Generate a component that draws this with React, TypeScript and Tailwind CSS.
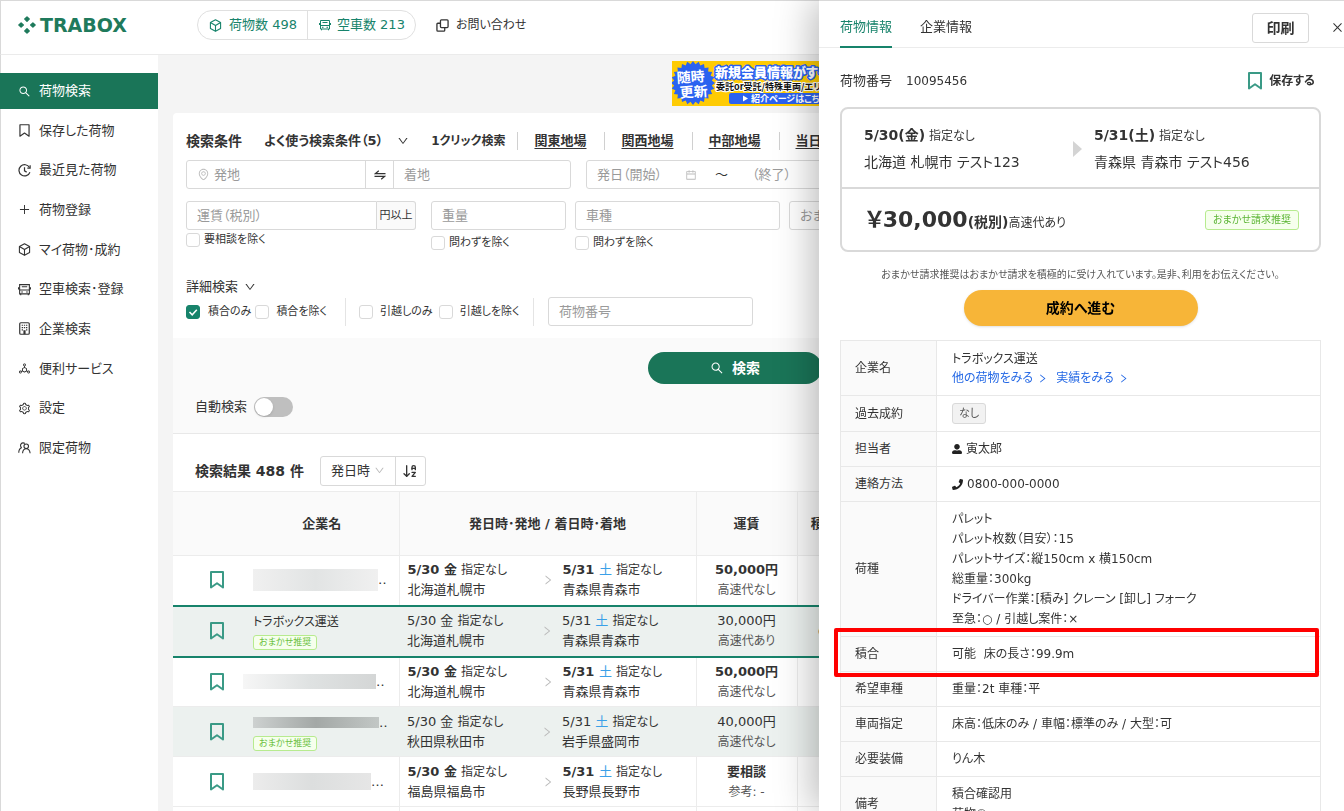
import React from "react";
import {
  AiOutlineSearch,
  AiOutlinePlus,
  AiOutlineDeploymentUnit,
  AiOutlineSetting,
  AiOutlineEnvironment,
  AiOutlineCalendar,
  AiOutlineDown,
  AiOutlineRight,
  AiOutlineClose,
} from "react-icons/ai";
import { FaUserAlt, FaPhone } from "react-icons/fa";
import { ArrowDownAZ } from "lucide-react";

type IconProps = { className?: string };

function Bookmark({ className }: IconProps) {
  return (
    <svg viewBox="0 0 14 18" className={className} fill="none" stroke="currentColor" strokeWidth="2" aria-hidden="true">
      <path d="M1 1h12v15.5l-6-4.2-6 4.2z" strokeLinejoin="round" />
    </svg>
  );
}

function SmallBookmark({ className }: IconProps) {
  return (
    <svg viewBox="0 0 12 12" className={className} fill="none" stroke="currentColor" strokeWidth="1.1" aria-hidden="true">
      <path d="M1.8.7h8.4v10.5L6 8.4l-4.2 2.8z" strokeLinejoin="round" />
    </svg>
  );
}

function Cube({ className }: IconProps) {
  return (
    <svg viewBox="0 0 12 12" className={className} fill="none" stroke="currentColor" strokeWidth="1" strokeLinejoin="round" aria-hidden="true">
      <path d="M6 .7l4.700 2.600v5.400L6 11.300 1.300 8.700V3.300z" />
      <path d="M1.300 3.300L6 6l4.700-2.700M6 6v5.300" />
    </svg>
  );
}

function History({ className }: IconProps) {
  return (
    <svg viewBox="0 0 12 12" className={className} fill="none" stroke="currentColor" strokeWidth="1.1" aria-hidden="true">
      <path d="M10.6 3.200A5.200 5.200 0 1 0 11 7.600" />
      <path d="M11.200 1.200v2.600H8.600" />
      <path d="M6 3v3.300l2 1.200" />
    </svg>
  );
}

function Truck({ className }: IconProps) {
  return (
    <svg viewBox="0 0 12 12" className={className} fill="none" stroke="currentColor" strokeWidth="1" aria-hidden="true">
      <path d="M1.500 10V1.500h9V10z" />
      <path d="M.5 4v2M11.500 4v2M1.500 6.500h9M3.500 3.500h5" />
      <path d="M3 8.300h1.500M7.500 8.300H9M2.500 10v1.300M9.500 10v1.300" />
    </svg>
  );
}

function Building({ className }: IconProps) {
  return (
    <svg viewBox="0 0 12 12" className={className} fill="none" stroke="currentColor" strokeWidth="1.1" aria-hidden="true">
      <rect x="1.6" y=".7" width="8.8" height="10.6" rx="1" />
      <path d="M3.400 3h1.200M5.400 3h1.200M7.400 3h1.200M3.400 5.200h1.200M5.400 5.200h1.200M7.400 5.200h1.200M3.400 7.200h1.200M7.400 7.200h1.200" />
      <path d="M6 7.600v3.600" strokeWidth="2" />
    </svg>
  );
}

function People({ className }: IconProps) {
  return (
    <svg viewBox="0 0 12 12" className={className} fill="none" stroke="currentColor" strokeWidth="1" aria-hidden="true">
      <path d="M3.200 6A2.400 2.400 0 1 1 6.300 2.300" />
      <path d="M.7 10.800c0-2.400 1-4 2.900-4.700" />
      <circle cx="7.600" cy="4.800" r="2.100" />
      <path d="M4.200 11.300c.2-2.600 1.400-4.200 3.400-4.200s3.300 1.600 3.600 4.200" />
    </svg>
  );
}

function Windows({ className }: IconProps) {
  return (
    <svg viewBox="0 0 14 14" className={className} fill="none" stroke="currentColor" strokeWidth="1.4" aria-hidden="true">
      <rect x="4.800" y="1" width="8.200" height="8.200" rx="1" />
      <path d="M4.600 4.600H2a1 1 0 0 0-1 1V12a1 1 0 0 0 1 1h6.400a1 1 0 0 0 1-1V9.400" />
    </svg>
  );
}

function Swap({ className }: IconProps) {
  return (
    <svg viewBox="0 0 12 12" className={className} fill="none" stroke="currentColor" strokeWidth="1.200" aria-hidden="true">
      <path d="M11.500 4.600H1.500L4.800 1.800M.5 7.400H10.500L7.200 10.200" />
    </svg>
  );
}

function LogoMark({ className }: IconProps) {
  return (
    <svg viewBox="0 0 18 18" className={className} fill="currentColor" aria-hidden="true">
      <path
        d="M9 1l2.200 2.100L9 5.200 6.800 3.100zM9 12.800l2.200 2.100L9 17l-2.200-2.100zM3.100 6.900L5.300 9l-2.200 2.100L.9 9zM14.900 6.900L17.100 9l-2.200 2.100L12.700 9z"
        stroke="currentColor"
        strokeWidth="1.400"
        strokeLinejoin="round"
      />
    </svg>
  );
}

const menu = [
  { label: "荷物検索", Icon: AiOutlineSearch },
  { label: "保存した荷物", Icon: SmallBookmark },
  { label: "最近見た荷物", Icon: History },
  { label: "荷物登録", Icon: AiOutlinePlus },
  { label: "マイ荷物･成約", Icon: Cube },
  { label: "空車検索･登録", Icon: Truck },
  { label: "企業検索", Icon: Building },
  { label: "便利サービス", Icon: AiOutlineDeploymentUnit },
  { label: "設定", Icon: AiOutlineSetting },
  { label: "限定荷物", Icon: People },
];

function Sidebar() {
  return (
    <nav className="w-[158px] shrink-0 border-l border-[#d9d9d9] bg-white pt-[18px]">
      <ul className="flex h-[393px] flex-col justify-between">
        {menu.map(({ label, Icon }, i) => (
          <li key={label}>
            <a
              href="#"
              className={
                i === 0
                  ? "-ml-px flex h-9 items-center gap-2 bg-[#1a7558] pl-[18px] text-white"
                  : "-ml-px flex h-9 items-center gap-2 pl-[18px]"
              }
            >
              <Icon className="h-[13px] w-[13px]" />
              {label}
            </a>
          </li>
        ))}
      </ul>
    </nav>
  );
}

function Header() {
  return (
    <header className="flex h-[55px] shrink-0 items-center border-t border-b border-l border-t-[#d9d9d9] border-b-[#ebebeb] border-l-[#d9d9d9] bg-white pb-[5px]">
      <a href="#" className="ml-[17px] flex w-[179px] items-center gap-1 text-[#1f7a5c]">
        <LogoMark className="h-[18px] w-[18px]" />
        <span className="text-[19px] leading-6 font-bold">TRABOX</span>
      </a>
      <div className="flex h-[30px] items-center rounded-full border border-[#e0e0e0] text-[#17836b]">
        <a href="#" className="flex h-full items-center gap-[7px] border-r border-[#e0e0e0] pr-[10px] pl-[11px]">
          <Cube className="h-[13px] w-[13px]" />
          荷物数 498
        </a>
        <a href="#" className="flex h-full items-center gap-[6px] pr-[10px] pl-[11px]">
          <Truck className="h-3 w-3" />
          空車数 213
        </a>
      </div>
      <a href="#" className="ml-5 flex items-center gap-[7px] text-[12px]">
        <Windows className="h-[13px] w-[13px]" />
        お問い合わせ
      </a>
    </header>
  );
}

function Banner() {
  const spikes = Array.from({ length: 48 }, (_, i) => {
    const r = i % 2 ? 19 : 22;
    const a = (i * Math.PI) / 24;
    return `${(22 + r * Math.cos(a)).toFixed(1)},${(22 + r * Math.sin(a)).toFixed(1)}`;
  }).join(" ");
  return (
    <a href="#" className="ml-[514px] block w-[320px]">
      <svg viewBox="0 0 320 45" className="block w-full font-['Noto_Sans_CJK_JP',sans-serif]" role="img" aria-label="新規会員情報">
        <rect width="320" height="45" fill="#fecb04" />
        <polygon points={spikes} fill="#2b62f0" transform="translate(-1 0)" />
        <rect x="57" y="32" width="240" height="11" rx="2" fill="#2b62f0" />
        <g fill="#fff" fontWeight="700">
          <text x="5" y="21" fontSize="14" transform="rotate(-4 20 22)">随時</text>
          <text x="7" y="36" fontSize="14" transform="rotate(-4 20 22)">更新</text>
          <text x="43" y="16" fontSize="13" fontWeight="900" stroke="#2b62f0" strokeWidth="3" paintOrder="stroke" strokeLinejoin="round">
            新規会員情報がすぐ届く
          </text>
          <text x="44" y="29" fontSize="9" fill="#111" stroke="#fff" strokeWidth="2" paintOrder="stroke">
            委託or受託/特殊車両/エリア
          </text>
          <path d="M71 34.500l5 3-5 3z" />
          <text x="79" y="41" fontSize="9">紹介ページはこちら</text>
        </g>
      </svg>
    </a>
  );
}

const field = "h-[29px] rounded-[3px] border border-[#d9d9d9] bg-white px-[10px] text-[13px] placeholder:text-[#9a9a9a]";

function Check({ label, checked = false, className = "gap-1" }: { label: string; checked?: boolean; className?: string }) {
  return (
    <label className={`flex items-center whitespace-nowrap text-[11px] leading-4 ${className}`}>
      <span className="grid h-[14px] w-[14px]">
        <input
          type="checkbox"
          defaultChecked={checked}
          className="peer col-start-1 row-start-1 h-[14px] w-[14px] appearance-none rounded-[3px] border border-[#d9d9d9] bg-white checked:border-[#17836b] checked:bg-[#17836b]"
        />
        <svg viewBox="0 0 14 14" className="pointer-events-none col-start-1 row-start-1 hidden h-[14px] w-[14px] peer-checked:block" fill="none" stroke="#fff" strokeWidth="1.500" aria-hidden="true">
          <path d="M3.500 7l2.700 2.800 4.600-5" />
        </svg>
      </span>
      {label}
    </label>
  );
}

const areas = ["関東地場", "関西地場", "中部地場", "当日積み"];

function SearchForm() {
  return (
    <form onSubmit={(e) => e.preventDefault()} className="overflow-hidden rounded-t">
      <div className="h-[225px] bg-white pt-[18px] pl-[13px] whitespace-nowrap">
        <div className="flex h-5 items-center">
          <h2 className="mr-[22px] text-[14px] font-bold">検索条件</h2>
          <button type="button" className="flex items-center gap-[14px] font-bold">
            よく使う検索条件（5）
            <AiOutlineDown className="h-3 w-3" />
          </button>
          <span className="mr-3 ml-[22px] text-[12px] font-bold">1クリック検索</span>
          {areas.map((a) => (
            <span key={a} className="flex h-[18px] items-center border-l border-[#d0d0d0] pr-[18px] pl-4">
              <a href="#" className="font-bold underline underline-offset-3">
                {a}
              </a>
            </span>
          ))}
        </div>

        <div className="mt-[9px] flex gap-[15px]">
          <div className="flex w-[385px] rounded-[3px] border border-[#d9d9d9]">
            <label className="flex h-[27px] w-[178px] items-center gap-1 pl-[10px]">
              <AiOutlineEnvironment className="h-[13px] w-[13px] shrink-0 text-[#bbb]" />
              <input aria-label="発地" placeholder="発地" className="w-full min-w-0 text-[13px] placeholder:text-[#9a9a9a]" />
            </label>
            <button type="button" aria-label="入れ替え" className="flex w-[29px] items-center justify-center border-x border-[#d9d9d9]">
              <Swap className="h-3 w-3" />
            </button>
            <input aria-label="着地" placeholder="着地" className="min-w-0 flex-1 px-[10px] text-[13px] placeholder:text-[#9a9a9a]" />
          </div>
          <div className="flex w-[400px] items-center rounded-[3px] border border-[#d9d9d9] pl-[10px]">
            <input aria-label="発日（開始）" placeholder="発日（開始）" className="w-[88px] text-[13px] placeholder:text-[#9a9a9a]" />
            <AiOutlineCalendar className="h-3 w-3 text-[#bbb]" />
            <span className="mr-6 ml-[18px]">〜</span>
            <input aria-label="（終了）" placeholder="（終了）" className="w-[100px] text-[13px] placeholder:text-[#9a9a9a]" />
          </div>
        </div>

        <div className="mt-3 flex">
          <div className="mr-[15px]">
            <div className="flex">
              <input aria-label="運賃（税別）" placeholder="運賃（税別）" className={`${field} w-[191px] rounded-r-none`} />
              <span className="flex w-[39px] items-center justify-center rounded-r-[3px] border border-l-0 border-[#d9d9d9] bg-[#fafafa] text-[11px]">
                円以上
              </span>
            </div>
            <Check label="要相談を除く" className="mt-[2px] gap-1" />
          </div>
          <div className="mr-[9px]">
            <input aria-label="重量" placeholder="重量" className={`${field} w-[135px]`} />
            <Check label="問わずを除く" className="mt-[5px] gap-1" />
          </div>
          <div className="mr-[9px]">
            <input aria-label="車種" placeholder="車種" className={`${field} w-[205px]`} />
            <Check label="問わずを除く" className="mt-[5px] gap-1" />
          </div>
          <input aria-label="おまかせ請求" placeholder="おまかせ請求" className={`${field} w-[205px]`} />
        </div>

        <button type="button" className="mt-[26px] flex h-5 items-center gap-[6px]">
          詳細検索
          <AiOutlineDown className="h-3 w-3" />
        </button>
        <div className="flex h-[29px] items-center">
          <div className="flex w-[160px] items-center gap-1 border-r border-[#e4e4e4] py-[6px]">
            <Check label="積合のみ" checked className="gap-2" />
            <Check label="積合を除く" className="gap-[7px]" />
          </div>
          <div className="ml-[13px] flex w-[175px] items-center gap-[6px] border-r border-[#e4e4e4] py-[6px]">
            <Check label="引越しのみ" className="gap-[7px]" />
            <Check label="引越しを除く" className="gap-[7px]" />
          </div>
          <input aria-label="荷物番号" placeholder="荷物番号" className={`${field} ml-[14px] w-[205px]`} />
        </div>
      </div>

      <div className="h-24 border-b border-[#e8e8e8] bg-[#fafafa] pt-[14px] pr-8">
        <button className="mx-auto flex h-8 w-[174px] items-center justify-center gap-2 rounded-full bg-[#1a7558] text-[14px] font-bold text-white">
          <AiOutlineSearch className="h-[14px] w-[14px]" />
          検索
        </button>
        <label className="mt-[13px] ml-[22px] flex w-fit items-center gap-[7px]">
          自動検索
          <span className="flex h-5 w-[39px] items-center rounded-full bg-[#bfbfbf] p-px has-checked:justify-end has-checked:bg-[#17836b]">
            <input type="checkbox" role="switch" className="h-[18px] w-[18px] appearance-none rounded-full bg-white shadow" />
          </span>
        </label>
      </div>
    </form>
  );
}

type Row = {
  name?: string;
  mask?: string;
  dots?: string;
  tag?: boolean;
  read?: boolean;
  selected?: boolean;
  from: string;
  to: string;
  fare: string;
  note: string;
};

const rows: Row[] = [
  { mask: "h-[22px] w-[125px] from-[#f0f0f0] via-[#e2e4e4] to-[#f0f0f0]", dots: "‥", from: "北海道札幌市", to: "青森県青森市", fare: "50,000円", note: "高速代なし" },
  { name: "トラボックス運送", tag: true, read: true, selected: true, from: "北海道札幌市", to: "青森県青森市", fare: "30,000円", note: "高速代あり" },
  { mask: "-ml-[10px] h-[15px] w-[133px] from-[#f6f6f6] via-[#dfe2e2] to-[#d4d6d6]", dots: "‥", from: "北海道札幌市", to: "青森県青森市", fare: "50,000円", note: "高速代なし" },
  { mask: "h-[11px] w-[126px] from-[#cdd1d0] via-[#a3a8a6] to-[#c2c7c5]", dots: "‥", tag: true, read: true, from: "秋田県秋田市", to: "岩手県盛岡市", fare: "40,000円", note: "高速代なし" },
  { mask: "h-[17px] w-[118px] from-[#ececec] via-[#dcdede] to-[#e6e6e6]", dots: "…", from: "福島県福島市", to: "長野県長野市", fare: "要相談", note: "参考: -" },
  { from: "", to: "", fare: "", note: "" },
];

function Place({ date, day, dayClass, place, bold }: { date: string; day: string; dayClass: string; place: string; bold: boolean }) {
  return (
    <div>
      <div>
        <span className={bold ? "font-bold" : ""}>
          {date} <span className={dayClass}>{day}</span>
        </span>{" "}
        <span className="text-[12px]">指定なし</span>
      </div>
      <div>{place}</div>
    </div>
  );
}

function Results() {
  return (
    <section className="bg-white">
      <div className="flex h-[57px] items-center pt-4 pl-[22px]">
        <h2 className="mr-4 text-[14px] font-bold">検索結果 488 件</h2>
        <div className="flex h-[30px] rounded-[3px] border border-[#d9d9d9]">
          <label className="grid w-[75px] items-center border-r border-[#d9d9d9]">
            <select aria-label="並び順" className="col-start-1 row-start-1 h-full w-full appearance-none pl-[10px] text-[13px]">
              <option>発日時</option>
            </select>
            <AiOutlineDown className="pointer-events-none col-start-1 row-start-1 mr-[10px] h-[11px] w-[11px] justify-self-end text-[#bbb]" />
          </label>
          <button aria-label="昇順" className="flex w-[29px] items-center justify-center">
            <ArrowDownAZ className="h-4 w-4" strokeWidth={2} />
          </button>
        </div>
      </div>
      <table className="w-full table-fixed border-collapse text-[13px] leading-5">
        <colgroup>
          <col className="w-[72px]" />
          <col className="w-[154px]" />
          <col className="w-[297px]" />
          <col className="w-[101px]" />
          <col className="w-[53px]" />
          <col />
        </colgroup>
        <thead>
          <tr className="h-16 border-y border-[#ececec] bg-[#fafafa]">
            <th />
            <th className="border-r border-[#ececec]">企業名</th>
            <th className="border-r border-[#ececec]">発日時･発地 / 着日時･着地</th>
            <th className="border-r border-[#ececec]">運賃</th>
            <th>積合</th>
            <th>備考</th>
          </tr>
        </thead>
        <tbody>
          {rows.map((r, i) => (
            <tr
              key={i}
              className={
                r.selected
                  ? "h-[51px] border-y-2 border-[#17836b] bg-[#ecf1ef]"
                  : r.read
                    ? "h-[50px] border-b border-[#ececec] bg-[#ecf1ef]"
                    : "h-[50px] border-b border-[#ececec]"
              }
            >
              {r.from ? (
                <>
                  <td className="pl-[37px]">
                    <button aria-label="保存" className="block text-[#3a9a86]">
                      <Bookmark className="h-[18px] w-[14px]" />
                    </button>
                  </td>
                  <td className={r.read ? "pl-2" : "border-r border-[#ececec] pl-2"}>
                    {r.name ? (
                      <div className="text-[12px]">{r.name}</div>
                    ) : (
                      <div className={r.tag ? "flex h-5 items-center" : "flex items-center"}>
                        <span className={`bg-gradient-to-r ${r.mask}`} />
                        <span className="leading-3">{r.dots}</span>
                      </div>
                    )}
                    {r.tag && (
                      <span className="mt-[3px] block w-fit rounded-[3px] border border-[#b7eb8f] bg-[#f6ffed] px-[5px] text-[9px] leading-[13px] text-[#6abf40]">
                        おまかせ推奨
                      </span>
                    )}
                  </td>
                  <td className={r.read ? "px-2" : "border-r border-[#ececec] px-2"}>
                    <div className="flex items-center">
                      <div className="w-[134px]">
                        <Place date="5/30" day="金" dayClass="" place={r.from} bold={!r.read} />
                      </div>
                      <AiOutlineRight className="mr-[9px] h-3 w-3 text-[#bbb]" />
                      <Place date="5/31" day="土" dayClass="font-normal text-[#3aa0e8]" place={r.to} bold={!r.read} />
                    </div>
                  </td>
                  <td className={r.read ? "text-center" : "border-r border-[#ececec] text-center"}>
                    <div className={r.read ? "" : "font-bold"}>{r.fare}</div>
                    <div className="text-[12px] text-[#555]">{r.note}</div>
                  </td>
                  <td className="text-center">{r.selected ? "○" : ""}</td>
                  <td />
                </>
              ) : (
                <>
                  <td />
                  <td className="border-r border-[#ececec]" />
                  <td className="border-r border-[#ececec]" />
                  <td className="border-r border-[#ececec]" />
                  <td />
                  <td />
                </>
              )}
            </tr>
          ))}
        </tbody>
      </table>
    </section>
  );
}

function MoreLink({ children }: { children: React.ReactNode }) {
  return (
    <a href="#" className="flex items-center gap-1 text-[#2468e5]">
      {children}
      <AiOutlineRight className="h-[11px] w-[11px]" />
    </a>
  );
}

const details: { label: string; body: React.ReactNode; marked?: boolean }[] = [
  {
    label: "企業名",
    body: (
      <div className="py-px">
        トラボックス運送
        <div className="flex gap-2 leading-[18px]">
          <MoreLink>他の荷物をみる</MoreLink>
          <MoreLink>実績をみる</MoreLink>
        </div>
      </div>
    ),
  },
  {
    label: "過去成約",
    body: <span className="block w-fit rounded-[3px] border border-[#d9d9d9] bg-[#f2f2f2] px-[6px] text-[11px] leading-[19px] text-[#555]">なし</span>,
  },
  {
    label: "担当者",
    body: (
      <span className="flex items-center gap-1">
        <FaUserAlt className="h-[10px] w-[10px] text-[#222]" />
        寅太郎
      </span>
    ),
  },
  {
    label: "連絡方法",
    body: (
      <span className="flex items-center gap-1">
        <FaPhone className="h-[11px] w-[11px] text-[#222]" />
        0800-000-0000
      </span>
    ),
  },
  {
    label: "荷種",
    body: (
      <>
        <div>パレット</div>
        <div>パレット枚数（目安）：15</div>
        <div>パレットサイズ：縦150cm x 横150cm</div>
        <div>総重量：300kg</div>
        <div>ドライバー作業：[積み] クレーン [卸し] フォーク</div>
        <div>至急：○ / 引越し案件：×</div>
      </>
    ),
  },
  { label: "積合", body: <>可能&nbsp; 床の長さ：99.9m</>, marked: true },
  { label: "希望車種", body: "重量：2t 車種：平" },
  { label: "車両指定", body: "床高：低床のみ / 車幅：標準のみ / 大型：可" },
  { label: "必要装備", body: "りん木" },
  {
    label: "備考",
    body: (
      <>
        <div>積合確認用</div>
        <div>荷物①</div>
      </>
    ),
  },
];

function Drawer() {
  return (
    <aside className="fixed inset-y-0 right-0 z-20 w-[525px] overflow-hidden border-t border-[#d9d9d9] bg-white shadow-[-6px_0_36px_rgba(0,0,0,0.28)]">
      <div className="flex h-[47px] items-center border-b border-[#ececec] pl-[21px]">
        <div role="tablist" className="flex h-[47px] gap-7">
          <button role="tab" aria-selected="true" className="border-b-2 border-[#17836b] pt-[7px] text-[#17836b]">
            荷物情報
          </button>
          <button role="tab" aria-selected="false" className="border-b-2 border-transparent pt-[7px]">
            企業情報
          </button>
        </div>
        <button className="mt-[7px] mr-[22px] ml-auto h-[30px] w-[57px] rounded-[3px] border border-[#d9d9d9] text-[14px] font-bold">印刷</button>
        <button aria-label="閉じる" className="mt-[7px]">
          <AiOutlineClose className="h-[13px] w-[13px]" />
        </button>
      </div>

      <div className="pr-[23px] pl-[21px]">
        <div className="flex h-[59px] items-center pt-[7px]">
          <span className="mr-[14px]">荷物番号</span>
          <span className="text-[12px]">10095456</span>
          <button className="mr-[6px] ml-auto flex items-center gap-[7px] text-[12px] font-bold">
            <Bookmark className="h-[18px] w-[14px] text-[#3a9a86]" />
            保存する
          </button>
        </div>

        <div className="rounded-lg border-2 border-[#d9d9d9]">
          <div className="flex h-20 items-center border-b-2 border-[#d9d9d9] pt-px pl-[22px] text-[14px] leading-[26px]">
            <div className="w-[209px]">
              <div className="text-[12px]">
                <b className="text-[14px]">5/30(金)</b> 指定なし
              </div>
              <div>北海道 札幌市 テスト123</div>
            </div>
            <svg viewBox="0 0 9 16" className="mr-3 h-4 w-[9px]" aria-hidden="true">
              <path d="M0 0l9 8-9 8z" fill="#d4d4d4" />
            </svg>
            <div>
              <div className="text-[12px]">
                <b className="text-[14px]">5/31(土)</b> 指定なし
              </div>
              <div>青森県 青森市 テスト456</div>
            </div>
          </div>
          <div className="flex h-[61px] items-center justify-between pr-5 pl-6">
            <div className="flex items-baseline">
              <b className="text-[22px] leading-8">￥30,000</b>
              <b className="text-[14px]">(税別)</b>
              <span className="text-[12px]">高速代あり</span>
            </div>
            <span className="rounded-[3px] border border-[#b7eb8f] bg-[#f6ffed] px-[7px] text-[10px] leading-[18px] text-[#5cb535]">おまかせ請求推奨</span>
          </div>
        </div>

        <p className="mt-[14px] text-center text-[10px] leading-[18px] whitespace-nowrap text-[#555]">
          おまかせ請求推奨はおまかせ請求を積極的に受け入れています。是非、利用をお伝えください。
        </p>
        <button className="mx-auto mt-[6px] block h-9 w-[234px] rounded-full bg-[#f7b538] text-[14px] font-bold text-black shadow-sm">成約へ進む</button>

        <table className="mt-[14px] w-full border-collapse text-[12px] leading-5">
          <tbody>
            {details.map((d) => (
              <tr key={d.label} className="relative border border-[#e8e8e8]">
                <th className="w-24 border-r border-[#e8e8e8] bg-[#fafafa] py-[7px] pl-[14px] text-left font-normal">
                  {d.label}
                  {d.marked && <span className="pointer-events-none absolute -top-[10px] right-px -bottom-[6px] -left-2 z-10 rounded-[2px] border-4 border-[#ff0000]" />}
                </th>
                <td className="py-[7px] pl-[15px]">{d.body}</td>
              </tr>
            ))}
          </tbody>
        </table>
      </div>
    </aside>
  );
}

export default function App() {
  return (
    <div className="flex h-screen flex-col overflow-hidden bg-[#f4f4f4] font-['DejaVu_Sans','Noto_Sans_CJK_JP',sans-serif] text-[13px] leading-5 text-[#333] [font-feature-settings:'palt']">
      <Header />
      <div className="flex min-h-0 flex-1">
        <Sidebar />
        <main className="min-w-0 flex-1 overflow-hidden">
          <div className="h-[58px] pt-[6px]">
            <Banner />
          </div>
          <div className="mx-[15px]">
            <SearchForm />
            <Results />
          </div>
        </main>
      </div>
      <Drawer />
    </div>
  );
}
